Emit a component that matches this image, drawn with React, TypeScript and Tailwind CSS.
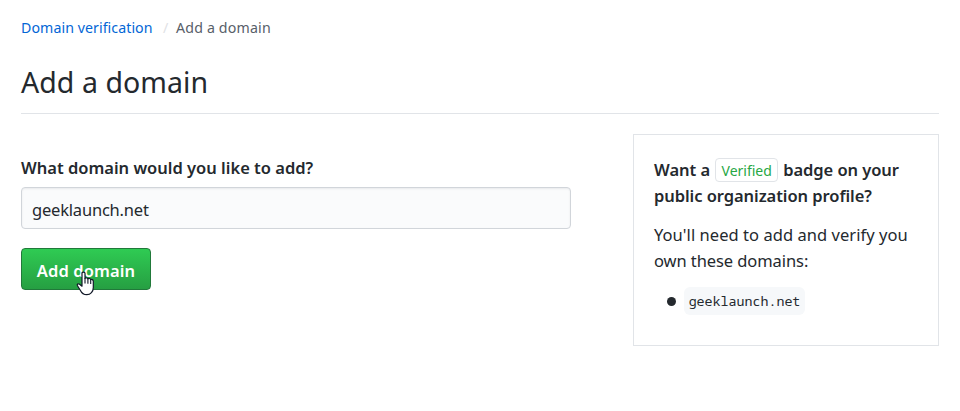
function HandCursor() {
  return (
    <svg
      className="pointer-events-none absolute left-[55px] top-[22px]"
      width="20"
      height="26"
      viewBox="0 0 20 26"
      aria-hidden="true"
    >
      <path
        d="M6 3.2C6 1.7 9 1.7 9 3.2V8.4C9.5 7.4 11.6 7.6 11.9 8.9C12.4 8 14.4 8.4 14.7 9.7C15.5 9 17.3 9.7 17.3 11.2V17.5C17.3 21.5 14.6 24.7 10.8 24.7C7.4 24.7 5.6 23 4.3 20.2L1.5 15.8C.6 14.2 2.2 13.2 3.6 14.2L6 16.2Z"
        fill="white"
        stroke="#111827"
        strokeWidth="1.2"
        strokeLinejoin="round"
      />
      <path d="M9 8.2V13.5M11.9 8.9V13.8M14.7 9.7V14" stroke="#111827" strokeWidth="1.1" fill="none" />
    </svg>
  );
}

export default function App() {
  return (
    <main className="h-[411px] bg-white px-[21px] pt-4 font-['Noto_Sans',sans-serif] text-[16.5px] text-[#24292e]">
      <nav className="flex h-6 items-center text-[14.2px] leading-6 tracking-[0.06px] whitespace-nowrap">
        <a href="#" className="w-[131px] text-[#0366d6]">Domain verification</a>
        <span className="ml-[11px] w-[13px] text-[#dfe2e5]">/</span>
        <span className="tracking-[0.17px] text-[#586069]">Add a domain</span>
      </nav>
      <header className="mt-5 flex h-[54px] border-b border-[#e1e4e8]">
        <h1 className="text-[28.5px] leading-[45px] tracking-[0.05px]">Add a domain</h1>
      </header>
      <div className="mt-5 flex items-start justify-between">
        <form className="w-[550px] pt-[21px]" onSubmit={(e) => e.preventDefault()}>
          <label htmlFor="domain" className="block h-8 leading-[26px] font-semibold">
            What domain would you like to add?
          </label>
          <input
            id="domain"
            defaultValue="geeklaunch.net"
            className="block h-[42px] w-full rounded-[4px] border border-[#d1d5da] bg-[#fafbfc] px-[10px] pt-[2px] tracking-[-0.2px] shadow-[inset_0_1px_2px_rgba(27,31,35,0.075)] outline-none"
          />
          <div className="relative mt-[19px] w-[130px]">
            <button className="h-[42px] w-full rounded-[4px] border border-[#21793a] bg-linear-to-b from-[#2fcb53] to-[#269f42] pt-[4px] font-semibold tracking-[0.12px] whitespace-nowrap text-white">
              Add domain
            </button>
            <HandCursor />
          </div>
        </form>
        <aside className="h-[212px] w-[306px] border border-[#e1e4e8] px-5 pt-[22px] leading-[26px]">
          <h2 className="font-semibold whitespace-nowrap">
            <span className="flex h-[26px] items-center">
              Want a
              <span className="mx-[5px] flex h-6 w-[63px] items-center justify-center rounded-[4px] border border-[#e1e4e8] pt-[2px] text-[14px] font-normal text-[#28a745]">
                Verified
              </span>
              <span className="tracking-[-0.06px]">badge on your</span>
            </span>
            <span className="block tracking-[-0.06px]">public organization profile?</span>
          </h2>
          <p className="mt-[13px] tracking-[0.05px] whitespace-nowrap">
            You'll need to add and verify you
            <br />
            <span className="tracking-[-0.08px]">own these domains:</span>
          </p>
          <ul className="mt-[13px] flex h-7 items-center">
            <li className="flex items-center">
              <span className="mr-2 ml-[13px] size-[9px] rounded-full bg-[#24292e]" />
              <code className="flex h-7 w-[121px] items-center justify-center rounded-[6px] bg-[#f6f8fa] font-['Noto_Sans_Mono','DejaVu_Sans_Mono',monospace] text-[13.3px]">
                geeklaunch.net
              </code>
            </li>
          </ul>
        </aside>
      </div>
    </main>
  );
}
